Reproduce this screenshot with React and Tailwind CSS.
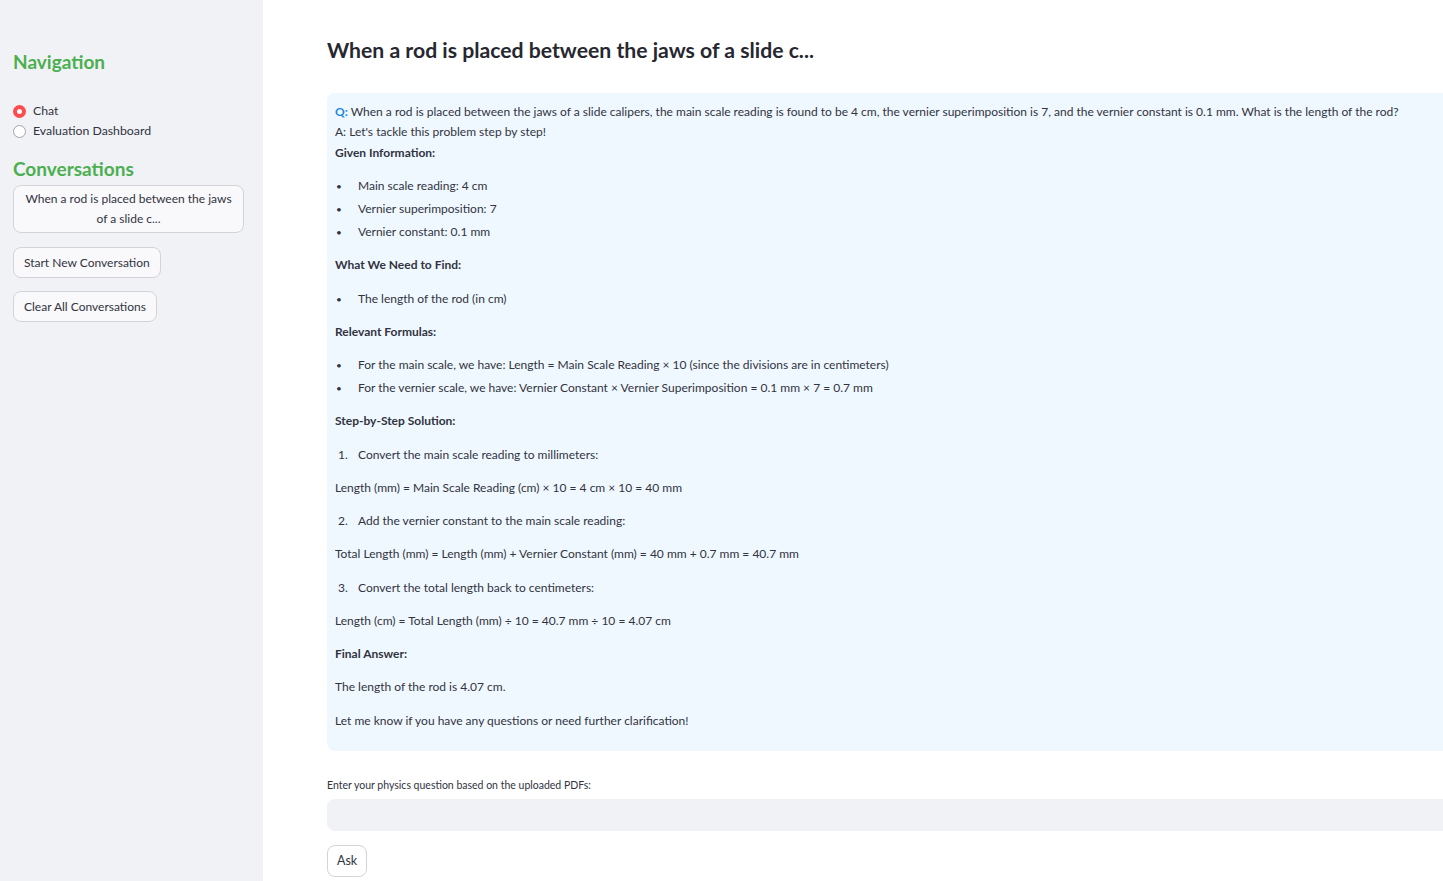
import React from 'react';

const FONT = { fontFamily: 'Lato, "Open Sans", "Liberation Sans", sans-serif' };

const Bullets = ({ items }) => (
  <ul className="flex flex-col gap-[3px]">
    {items.map((t, i) => (
      <li key={i} className="flex h-[20px] items-center">
        <span className="w-[23px] pl-[1px] text-[10px]">•</span>
        <span>{t}</span>
      </li>
    ))}
  </ul>
);

const Step = ({ n, children }) => (
  <div className="flex h-[20px] items-center">
    <span className="w-[23px] pl-[3px]">{n}.</span>
    <span>{children}</span>
  </div>
);

const P = ({ children, bold }) => (
  <p className={`h-[20px] leading-[20px] ${bold ? 'font-bold' : ''}`}>{children}</p>
);

const SideButton = ({ children, className = '' }) => (
  <button className={`border border-[#d3d4d9] rounded-lg bg-[#f9f9fb] text-[#31333f] text-[12px] px-[10px] ${className}`}>
    {children}
  </button>
);

export default function App() {
  return (
    <div className="flex w-screen h-[881px] overflow-hidden bg-white text-[#31333f]" style={FONT}>
      {/* sidebar */}
      <aside className="w-[263px] shrink-0 bg-[#f0f2f6] px-[13px] pt-[49px]">
        <h2 className="text-[19px] font-bold text-[#4caf50] leading-[26px]">Navigation</h2>
        <div className="mt-[27px] text-[12.3px] space-y-[2px]">
          <label className="flex items-center h-[18px] gap-[7px]">
            <span className="w-[13px] h-[13px] rounded-full border-[4px] border-[#ff4b4b] bg-white" />
            Chat
          </label>
          <label className="flex items-center h-[18px] gap-[7px]">
            <span className="w-[13px] h-[13px] rounded-full border border-[#a3a4ab] bg-white" />
            Evaluation Dashboard
          </label>
        </div>
        <h2 className="mt-[16px] text-[19px] font-bold text-[#4caf50] leading-[26px]">Conversations</h2>
        <SideButton className="mt-[3px] w-[231px] h-[48px] leading-[20px] px-[6px]">
          When a rod is placed between the jaws of a slide c...
        </SideButton>
        <div className="mt-[14px]">
          <SideButton className="h-[31px]">Start New Conversation</SideButton>
        </div>
        <div className="mt-[13px]">
          <SideButton className="h-[31px]">Clear All Conversations</SideButton>
        </div>
      </aside>

      {/* main */}
      <main className="flex-1 min-w-0 pl-[64px] pt-[35px]">
        <div className="w-[1200px]">
          <h1 className="text-[21.2px] font-bold leading-[30px] text-[#262730]">
            When a rod is placed between the jaws of a slide c...
          </h1>

          <div className="mt-[28px] bg-[#f0f8ff] rounded-lg px-[8px] pt-[9px] pb-[20px] text-[12px] leading-[20px] flex flex-col gap-[13px]">
            <div>
              <p className="h-[20px]">
                <span className="font-bold text-[#1e88e5]">Q:</span> When a rod is placed between the jaws of a slide calipers, the main scale reading is found to be 4 cm, the vernier superimposition is 7, and the vernier constant is 0.1 mm. What is the length of the rod?
              </p>
              <p className="h-[20px]">A: Let's tackle this problem step by step!</p>
              <p className="h-[21px] pt-[1px] font-bold">Given Information:</p>
            </div>
            <Bullets items={['Main scale reading: 4 cm', 'Vernier superimposition: 7', 'Vernier constant: 0.1 mm']} />
            <P bold>What We Need to Find:</P>
            <div className="pt-[1px]">
              <Bullets items={['The length of the rod (in cm)']} />
            </div>
            <P bold>Relevant Formulas:</P>
            <Bullets
              items={[
                'For the main scale, we have: Length = Main Scale Reading × 10 (since the divisions are in centimeters)',
                'For the vernier scale, we have: Vernier Constant × Vernier Superimposition = 0.1 mm × 7 = 0.7 mm',
              ]}
            />
            <P bold>Step-by-Step Solution:</P>
            <div className="pt-[1px]">
              <Step n={1}>Convert the main scale reading to millimeters:</Step>
            </div>
            <P>Length (mm) = Main Scale Reading (cm) × 10 = 4 cm × 10 = 40 mm</P>
            <Step n={2}>Add the vernier constant to the main scale reading:</Step>
            <P>Total Length (mm) = Length (mm) + Vernier Constant (mm) = 40 mm + 0.7 mm = 40.7 mm</P>
            <div className="pt-[1px]">
              <Step n={3}>Convert the total length back to centimeters:</Step>
            </div>
            <P>Length (cm) = Total Length (mm) ÷ 10 = 40.7 mm ÷ 10 = 4.07 cm</P>
            <P bold>Final Answer:</P>
            <P>The length of the rod is 4.07 cm.</P>
            <div className="pt-[1px]">
              <P>Let me know if you have any questions or need further clarification!</P>
            </div>
          </div>

          <label className="block mt-[26px] text-[10.5px] leading-[16px]">
            Enter your physics question based on the uploaded PDFs:
          </label>
          <div className="mt-[6px] h-[32px] rounded-lg bg-[#f0f2f6]" />
          <button className="mt-[14px] h-[32px] px-[9px] border border-[#d3d4d9] rounded-lg bg-white text-[12.5px]">
            Ask
          </button>
        </div>
      </main>
    </div>
  );
}
